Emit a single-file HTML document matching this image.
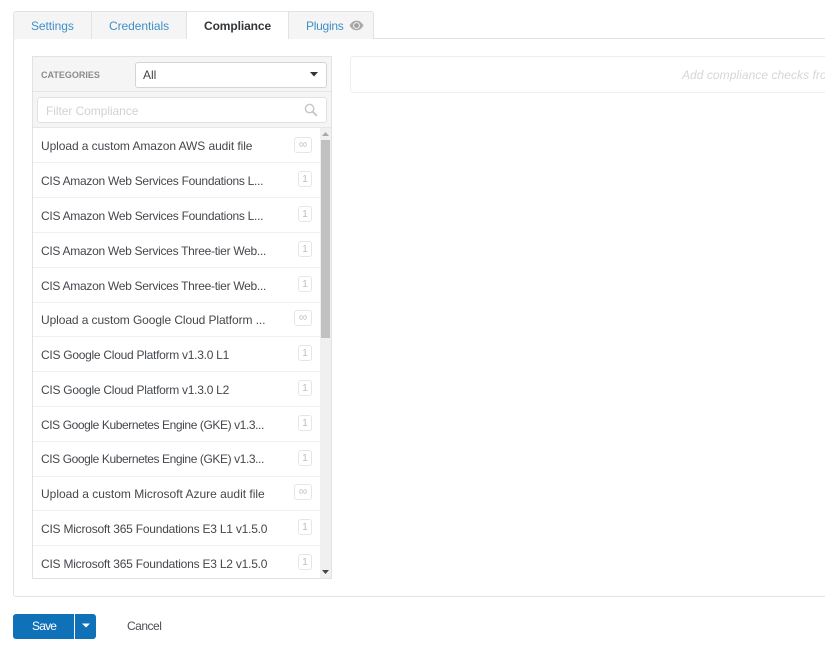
<!DOCTYPE html>
<html><head><meta charset="utf-8"><style>
html,body{margin:0;padding:0;background:#fff;width:825px;height:657px;overflow:hidden}
body{position:relative;font-family:"Liberation Sans",sans-serif;font-size:12px;color:#4b4f54}
div,span,svg{position:absolute;box-sizing:border-box}
.t{white-space:nowrap;line-height:16px}
.tab{top:11px;height:28px;background:#f5f5f5;border:1px solid #e2e2e2;border-bottom:none}
.row{left:41px;font-size:12px;color:#44474c}
.sep{left:33px;width:287px;height:1px;background:#f0f0f0}
.b{width:14px;height:16px;left:298px;border:1px solid #e6e6e6;border-radius:3px;color:#bdbdbd;font-size:10px;text-align:center;line-height:15px}
.i{width:18px;height:16px;left:294px;border:1px solid #e6e6e6;border-radius:3px;color:#c4c4c4;font-size:12px;text-align:center;line-height:13px}
</style></head><body>
<div style="left:13px;top:38px;width:830px;height:559px;border:1px solid #e2e2e2;border-radius:3px"></div>
<div class="tab" style="left:13px;width:79px;border-radius:3px 0 0 0"></div>
<div class="tab" style="left:91px;width:96px"></div>
<div style="left:187px;top:11px;width:102px;height:28px;background:#fff;border-top:1px solid #e8e8e8"></div>
<div class="tab" style="left:288px;width:86px;border-radius:0 3px 0 0"></div>
<span class="t" style="left:31px;top:18px;color:#3f8fc9;letter-spacing:-.075px">Settings</span>
<span class="t" style="left:109px;top:18px;color:#3f8fc9;letter-spacing:-.06px">Credentials</span>
<span class="t" style="left:204px;top:18px;color:#33363a;font-weight:bold;letter-spacing:-.1px">Compliance</span>
<span class="t" style="left:306px;top:18px;color:#3f8fc9;letter-spacing:-.27px">Plugins</span>
<svg style="left:349px;top:20px" width="15" height="11" viewBox="0 0 15 11"><path d="M0.5 5.5C3 1.5 5 .8 7.5 .8S12 1.5 14.5 5.5C12 9.5 10 10.2 7.5 10.2S3 9.5 .5 5.5Z" fill="#a9a9a9"/><circle cx="7.5" cy="5.5" r="3.4" fill="#f5f5f5"/><circle cx="7.5" cy="5.5" r="2.4" fill="#a0a0a0"/></svg>

<div style="left:32px;top:56px;width:300px;height:523px;border:1px solid #e2e2e2;background:#fff"></div>
<div style="left:33px;top:57px;width:298px;height:35px;background:#f5f5f5;border-bottom:1px solid #e6e6e6"></div>
<div style="left:33px;top:92px;width:298px;height:36px;background:#f5f5f5;border-bottom:1px solid #e6e6e6"></div>
<span class="t" style="left:41px;top:67px;font-size:9px;font-weight:bold;color:#8c8c8c">CATEGORIES</span>
<div style="left:135px;top:62px;width:192px;height:26px;background:#fff;border:1px solid #d4d4d4;border-radius:3px"></div>
<span class="t" style="left:143px;top:67px;color:#444;letter-spacing:0">All</span>
<svg style="left:310px;top:72px" width="8" height="5"><path d="M0 0H8L4 4.5Z" fill="#333"/></svg>
<div style="left:37px;top:97px;width:290px;height:26px;background:#fff;border:1px solid #e2e2e2;border-radius:3px"></div>
<span class="t" style="left:46px;top:103px;color:#d2d2d2;letter-spacing:-.06px">Filter Compliance</span>
<svg style="left:304px;top:103px" width="14" height="14" viewBox="0 0 14 14"><circle cx="5.6" cy="5.6" r="4.2" fill="none" stroke="#c8c8c8" stroke-width="1.5"/><path d="M8.8 8.8L12.8 12.8" stroke="#c8c8c8" stroke-width="2"/></svg>

<div style="left:320px;top:128px;width:11px;height:450px;background:#f0f0f0"></div>
<div style="left:321px;top:140px;width:9px;height:198px;background:#c1c1c1"></div>
<svg style="left:322px;top:132px" width="7" height="5"><path d="M0 4H7L3.5 0Z" fill="#a8a8a8"/></svg>
<svg style="left:322px;top:570px" width="7" height="5"><path d="M0 0H7L3.5 4Z" fill="#444"/></svg>

<span class="t row" style="top:138px;letter-spacing:-.08px">Upload a custom Amazon AWS audit file</span><div class="i" style="top:137px">∞</div><div class="sep" style="top:162px"></div>
<span class="t row" style="top:173px;letter-spacing:-.275px">CIS Amazon Web Services Foundations L...</span><div class="b" style="top:171px">1</div><div class="sep" style="top:197px"></div>
<span class="t row" style="top:208px;letter-spacing:-.275px">CIS Amazon Web Services Foundations L...</span><div class="b" style="top:206px">1</div><div class="sep" style="top:232px"></div>
<span class="t row" style="top:243px;letter-spacing:-.285px">CIS Amazon Web Services Three-tier Web...</span><div class="b" style="top:241px">1</div><div class="sep" style="top:267px"></div>
<span class="t row" style="top:278px;letter-spacing:-.285px">CIS Amazon Web Services Three-tier Web...</span><div class="b" style="top:276px">1</div><div class="sep" style="top:302px"></div>
<span class="t row" style="top:312px;letter-spacing:-.09px">Upload a custom Google Cloud Platform ...</span><div class="i" style="top:310px">∞</div><div class="sep" style="top:336px"></div>
<span class="t row" style="top:347px;letter-spacing:-.27px">CIS Google Cloud Platform v1.3.0 L1</span><div class="b" style="top:345px">1</div><div class="sep" style="top:371px"></div>
<span class="t row" style="top:382px;letter-spacing:-.27px">CIS Google Cloud Platform v1.3.0 L2</span><div class="b" style="top:380px">1</div><div class="sep" style="top:406px"></div>
<span class="t row" style="top:417px;letter-spacing:-.41px">CIS Google Kubernetes Engine (GKE) v1.3...</span><div class="b" style="top:415px">1</div><div class="sep" style="top:441px"></div>
<span class="t row" style="top:451px;letter-spacing:-.41px">CIS Google Kubernetes Engine (GKE) v1.3...</span><div class="b" style="top:450px">1</div><div class="sep" style="top:476px"></div>
<span class="t row" style="top:486px;letter-spacing:-.01px">Upload a custom Microsoft Azure audit file</span><div class="i" style="top:484px">∞</div><div class="sep" style="top:510px"></div>
<span class="t row" style="top:521px;letter-spacing:-.22px">CIS Microsoft 365 Foundations E3 L1 v1.5.0</span><div class="b" style="top:519px">1</div><div class="sep" style="top:545px"></div>
<span class="t row" style="top:556px;letter-spacing:-.22px">CIS Microsoft 365 Foundations E3 L2 v1.5.0</span><div class="b" style="top:554px">1</div>

<div style="left:350px;top:56px;width:490px;height:37px;border:1px solid #eeeeee;border-radius:3px"></div>
<span class="t" style="left:682px;top:67px;color:#d6d6d6;font-style:italic;letter-spacing:.05px">Add compliance checks from</span>

<div style="left:13px;top:614px;width:61px;height:25px;background:#0f71b8;border-radius:3px 0 0 3px"></div>
<div style="left:75px;top:614px;width:21px;height:25px;background:#0f71b8;border-radius:0 3px 3px 0"></div>
<span class="t" style="left:32px;top:618px;color:#fff;letter-spacing:-.8px">Save</span>
<svg style="left:81px;top:623px" width="10" height="6"><path d="M1 0.5H9L5 4.5Z" fill="#fff"/></svg>
<span class="t" style="left:127px;top:618px;color:#4b4f54;letter-spacing:-.5px">Cancel</span>
</body></html>
